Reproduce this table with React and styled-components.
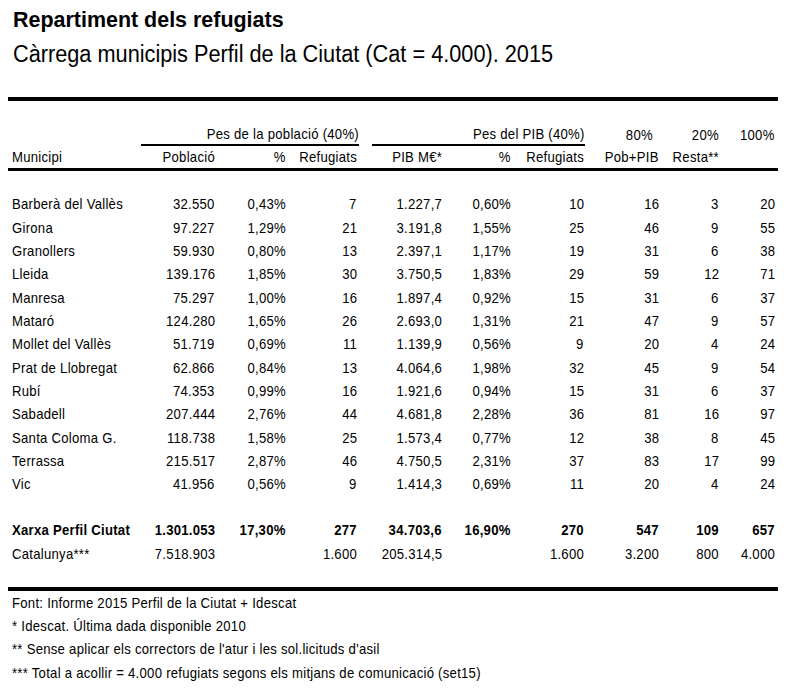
import React from "react";
import styled, { createGlobalStyle } from "styled-components";

const GlobalStyle = createGlobalStyle`
  body {
    margin: 0;
    background: #ffffff;
    color: #000000;
    font-family: "Liberation Sans", Arial, sans-serif;
  }
`;

const Page = styled.div`
  width: 789px;
  height: 695px;
  background: #ffffff;
  overflow: hidden;
`;

// the reference uses a narrow face; squeeze the regular one to match
const Txt = styled.span`
  display: inline-block;
  transform: scaleX(${props => props.$sx || 0.875});
  transform-origin: ${props => props.$origin || "left"} center;
`;

const Title = styled.h1`
  margin: 0;
  padding: 7px 0 0 13px;
  font-size: 22px;
  line-height: 25px;
  font-weight: bold;
  white-space: nowrap;
`;

const Subtitle = styled.h2`
  margin: 8px 0 0 13px;
  font-size: 23px;
  line-height: 28px;
  font-weight: normal;
  white-space: nowrap;
`;

const Rule = styled.div`
  margin: ${props => props.$top || 0}px 0 0 8px;
  width: 770px;
  height: ${props => props.$size || 4}px;
  background: #000000;
`;

const Grid = styled.div`
  display: grid;
  width: 770px;
  margin-left: 8px;
  grid-template-columns: 133px 74px 71px 71px 85px 69px 73px 75px 60px 56px 3px;
  font-size: 15px;
  letter-spacing: 0.3px;
`;

const Row = styled.div`
  display: contents;
`;

const Cell = styled.div`
  height: ${props => props.$h || 23.33}px;
  line-height: ${props => props.$h || 23.33}px;
  text-align: ${props => (props.$left ? "left" : "right")};
  padding-left: ${props => (props.$left ? 4 : 0)}px;
  padding-right: ${props => props.$pr || 0}px;
  font-weight: ${props => (props.$bold ? "bold" : "normal")};
  white-space: nowrap;
`;

const HeadCell = styled(Cell)`
  border-bottom: 3px solid #000000;
`;

const Group = styled.div`
  grid-column: ${props => props.$cols};
  margin: 0 ${props => props.$mr || 0}px 0 ${props => props.$ml || 0}px;
  height: 21px;
  line-height: 21px;
  text-align: right;
  border-bottom: 2px solid #000000;
  white-space: nowrap;
`;

const Spacer = styled.div`
  grid-column: 1 / -1;
  height: ${props => props.$h}px;
`;

const Notes = styled.div`
  padding-left: 12px;
  font-size: 15px;
  letter-spacing: 0.3px;
`;

const Note = styled.div`
  height: 23.33px;
  line-height: 23.33px;
  white-space: nowrap;
`;

const rows = [
  ["Barberà del Vallès", "32.550", "0,43%", "7", "1.227,7", "0,60%", "10", "16", "3", "20"],
  ["Girona", "97.227", "1,29%", "21", "3.191,8", "1,55%", "25", "46", "9", "55"],
  ["Granollers", "59.930", "0,80%", "13", "2.397,1", "1,17%", "19", "31", "6", "38"],
  ["Lleida", "139.176", "1,85%", "30", "3.750,5", "1,83%", "29", "59", "12", "71"],
  ["Manresa", "75.297", "1,00%", "16", "1.897,4", "0,92%", "15", "31", "6", "37"],
  ["Mataró", "124.280", "1,65%", "26", "2.693,0", "1,31%", "21", "47", "9", "57"],
  ["Mollet del Vallès", "51.719", "0,69%", "11", "1.139,9", "0,56%", "9", "20", "4", "24"],
  ["Prat de Llobregat", "62.866", "0,84%", "13", "4.064,6", "1,98%", "32", "45", "9", "54"],
  ["Rubí", "74.353", "0,99%", "16", "1.921,6", "0,94%", "15", "31", "6", "37"],
  ["Sabadell", "207.444", "2,76%", "44", "4.681,8", "2,28%", "36", "81", "16", "97"],
  ["Santa Coloma G.", "118.738", "1,58%", "25", "1.573,4", "0,77%", "12", "38", "8", "45"],
  ["Terrassa", "215.517", "2,87%", "46", "4.750,5", "2,31%", "37", "83", "17", "99"],
  ["Vic", "41.956", "0,56%", "9", "1.414,3", "0,69%", "11", "20", "4", "24"],
];

const total = ["Xarxa Perfil Ciutat", "1.301.053", "17,30%", "277", "34.703,6", "16,90%", "270", "547", "109", "657"];
const catalunya = ["Catalunya***", "7.518.903", "", "1.600", "205.314,5", "", "1.600", "3.200", "800", "4.000"];

const headers = ["Municipi", "Població", "%", "Refugiats", "PIB M€*", "%", "Refugiats", "Pob+PIB", "Resta**", ""];

const notes = [
  "Font: Informe 2015 Perfil de la Ciutat + Idescat",
  "* Idescat. Última dada disponible 2010",
  "** Sense aplicar els correctors de l'atur i les sol.licituds d'asil",
  "*** Total a acollir = 4.000 refugiats segons els mitjans de comunicació (set15)",
];

const DataRow = ({ values, bold }) => (
  <Row>
    {values.map((v, i) => (
      <Cell key={i} $left={i === 0} $bold={bold}>
        <Txt $origin={i === 0 ? "left" : "right"}>{v}</Txt>
      </Cell>
    ))}
    <Cell />
  </Row>
);

export default function App() {
  return (
    <Page>
      <GlobalStyle />
      <Title>
        <Txt $sx={0.975}>Repartiment dels refugiats</Txt>
      </Title>
      <Subtitle>
        <Txt $sx={0.944}>Càrrega municipis Perfil de la Ciutat (Cat = 4.000). 2015</Txt>
      </Subtitle>
      <Rule $top={29} $size={4} />
      <Grid>
        <Spacer $h={22} />
        <Row>
          <Cell $h={23} />
          <Group $cols="2 / 5" $mr={-2}>
            <Txt $origin="right">Pes de la població (40%)</Txt>
          </Group>
          <Group $cols="5 / 8" $ml={15} $mr={-1}>
            <Txt $origin="right">Pes del PIB (40%)</Txt>
          </Group>
          <Cell $h={23} $pr={6}>
            <Txt $origin="right">80%</Txt>
          </Cell>
          <Cell $h={23}>
            <Txt $origin="right">20%</Txt>
          </Cell>
          <Cell $h={23}>
            <Txt $origin="right">100%</Txt>
          </Cell>
          <Cell $h={23} />
        </Row>
        <Row>
          {headers.map((h, i) => (
            <HeadCell key={i} $h={22} $left={i === 0}>
              <Txt $origin={i === 0 ? "left" : "right"}>{h}</Txt>
            </HeadCell>
          ))}
          <HeadCell $h={22} />
        </Row>
        <Spacer $h={21.33} />
        {rows.map(r => (
          <DataRow key={r[0]} values={r} />
        ))}
        <Spacer $h={22.67} />
        <DataRow values={total} bold />
        <DataRow values={catalunya} />
        <Spacer $h={21.67} />
      </Grid>
      <Rule $size={4} />
      <Notes>
        {notes.map(n => (
          <Note key={n}>
            <Txt>{n}</Txt>
          </Note>
        ))}
      </Notes>
    </Page>
  );
}
